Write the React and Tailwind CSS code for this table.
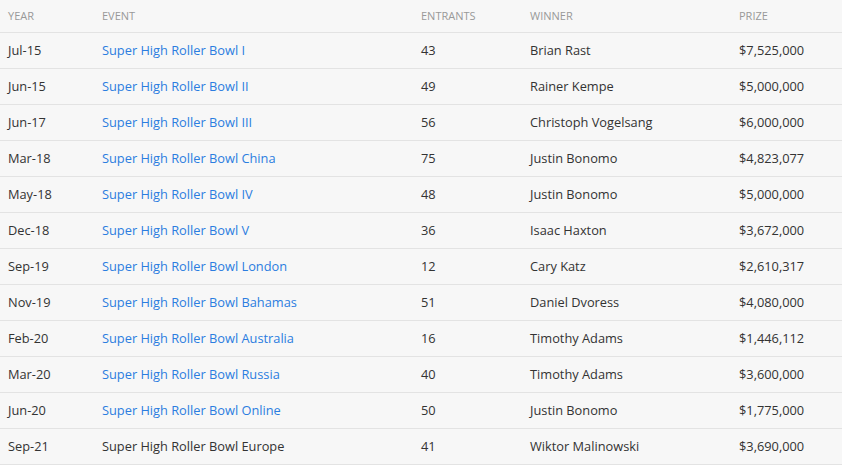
import React from "react";

const rows = [
  ["Jul-15", "Super High Roller Bowl I", "43", "Brian Rast", "$7,525,000", true],
  ["Jun-15", "Super High Roller Bowl II", "49", "Rainer Kempe", "$5,000,000", true],
  ["Jun-17", "Super High Roller Bowl III", "56", "Christoph Vogelsang", "$6,000,000", true],
  ["Mar-18", "Super High Roller Bowl China", "75", "Justin Bonomo", "$4,823,077", true],
  ["May-18", "Super High Roller Bowl IV", "48", "Justin Bonomo", "$5,000,000", true],
  ["Dec-18", "Super High Roller Bowl V", "36", "Isaac Haxton", "$3,672,000", true],
  ["Sep-19", "Super High Roller Bowl London", "12", "Cary Katz", "$2,610,317", true],
  ["Nov-19", "Super High Roller Bowl Bahamas", "51", "Daniel Dvoress", "$4,080,000", true],
  ["Feb-20", "Super High Roller Bowl Australia", "16", "Timothy Adams", "$1,446,112", true],
  ["Mar-20", "Super High Roller Bowl Russia", "40", "Timothy Adams", "$3,600,000", true],
  ["Jun-20", "Super High Roller Bowl Online", "50", "Justin Bonomo", "$1,775,000", true],
  ["Sep-21", "Super High Roller Bowl Europe", "41", "Wiktor Malinowski", "$3,690,000", false],
];

const cols = "grid grid-cols-[94px_319px_109px_209px_1fr]";

export default function App() {
  return (
    <div className="w-[842px] h-[465px] bg-[#f7f7f7] overflow-hidden" style={{ fontFamily: '"Open Sans", sans-serif' }}>
      <div className={`${cols} h-[33px] items-center border-b border-[#e3e3e3] text-[11px] text-[#999999] uppercase`}>
        <div className="pl-2">Year</div>
        <div className="pl-2">Event</div>
        <div className="pl-2">Entrants</div>
        <div className="pl-2">Winner</div>
        <div className="pl-2">Prize</div>
      </div>
      {rows.map((r) => (
        <div key={r[0] + r[1]} className={`${cols} h-[36px] pt-[1px] items-center border-b border-[#e3e3e3] text-[12.8px] text-[#333333]`}>
          <div className="pl-2">{r[0]}</div>
          <div className={`pl-2 ${r[5] ? "text-[#2b7de0]" : ""}`}>{r[1]}</div>
          <div className="pl-2">{r[2]}</div>
          <div className="pl-2">{r[3]}</div>
          <div className="pl-2">{r[4]}</div>
        </div>
      ))}
    </div>
  );
}
